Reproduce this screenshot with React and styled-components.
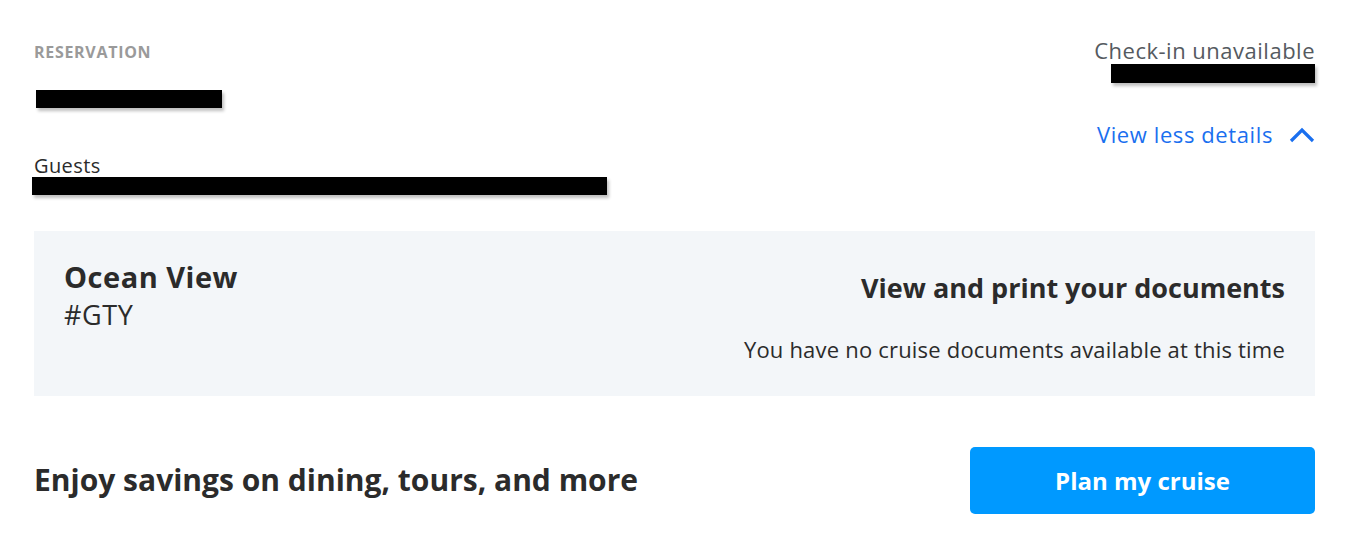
import React from "react";
import styled, { createGlobalStyle } from "styled-components";

const GlobalStyle = createGlobalStyle`
  body {
    margin: 0;
    background: #fff;
    font-family: "Open Sans", Lato, sans-serif;
    color: #2b2b2b;
  }
`;

const Page = styled.div`
  padding: 41px 33px 0 34px;
`;

const TopRow = styled.div`
  display: flex;
  justify-content: space-between;
  align-items: flex-start;
`;

const Column = styled.div`
  display: flex;
  flex-direction: column;
  align-items: ${(props) => (props.right ? "flex-end" : "flex-start")};
`;

const Label = styled.span`
  margin-top: 1px;
  font-size: 16px;
  font-weight: 700;
  color: #9a9a9a;
  letter-spacing: 0.7px;
  line-height: 20px;
`;

const Redacted = styled.div`
  width: ${(props) => props.w}px;
  height: ${(props) => props.h || 18}px;
  margin-top: ${(props) => props.mt || 0}px;
  margin-left: ${(props) => props.ml || 0}px;
  background: #000;
  box-shadow: 2px 3px 3px rgba(0, 0, 0, 0.25);
`;

const GuestsLabel = styled.span`
  margin-top: 47px;
  font-size: 20px;
  letter-spacing: 0.4px;
  line-height: 22px;
  color: #2b2b2b;
`;

const Status = styled.span`
  margin-top: -2px;
  font-size: 22px;
  letter-spacing: 0.5px;
  line-height: 22px;
  color: #555a60;
`;

const ToggleLink = styled.a`
  display: flex;
  align-items: center;
  gap: 16px;
  margin-top: 38px;
  font-size: 22px;
  letter-spacing: 0.6px;
  line-height: 27px;
  color: #1a6fef;
  text-decoration: none;
  cursor: pointer;
`;

const Panel = styled.div`
  margin-top: 36px;
  background: #f3f6f9;
  display: flex;
  justify-content: space-between;
  padding: 30px 30px 0;
  height: 165px;
  box-sizing: border-box;
`;

const RoomName = styled.h2`
  margin: 0;
  font-size: 29px;
  letter-spacing: 0.5px;
  line-height: 32px;
  font-weight: 700;
  color: #2b2b2b;
`;

const RoomCode = styled.span`
  margin-top: 6px;
  font-size: 27px;
  letter-spacing: 0.6px;
  line-height: 32px;
  color: #2b2b2b;
`;

const DocsTitle = styled.h3`
  margin: 12px 0 0;
  font-size: 27px;
  line-height: 30px;
  font-weight: 700;
  color: #2b2b2b;
`;

const DocsNote = styled.p`
  margin: 34px 0 0;
  font-size: 22px;
  letter-spacing: 0.2px;
  line-height: 24px;
  color: #2b2b2b;
`;

const PromoRow = styled.div`
  display: flex;
  justify-content: space-between;
  align-items: center;
  margin-top: 51px;
`;

const PromoText = styled.h2`
  margin: 0 0 3px;
  font-size: 30px;
  font-weight: 700;
  color: #2b2b2b;
`;

const PrimaryButton = styled.button`
  width: 345px;
  height: 67px;
  border: none;
  border-radius: 5px;
  background: #0099ff;
  color: #fff;
  font-family: inherit;
  font-size: 24px;
  font-weight: 700;
  cursor: pointer;
`;

const ChevronUp = () => (
  <svg width="26" height="16" viewBox="0 0 26 16" fill="none">
    <path d="M2 14 L13 3 L24 14" stroke="#1a6fef" strokeWidth="3.2" />
  </svg>
);

export default function App() {
  return (
    <>
      <GlobalStyle />
      <Page>
        <TopRow>
          <Column>
            <Label>RESERVATION</Label>
            <Redacted w={186} mt={28} ml={2} />
            <GuestsLabel>Guests</GuestsLabel>
            <Redacted w={575} mt={0} ml={-2} />
          </Column>
          <Column right>
            <Status>Check-in unavailable</Status>
            <Redacted w={204} h={19} mt={3} />
            <ToggleLink>
              View less details
              <ChevronUp />
            </ToggleLink>
          </Column>
        </TopRow>
        <Panel>
          <Column>
            <RoomName>Ocean View</RoomName>
            <RoomCode>#GTY</RoomCode>
          </Column>
          <Column right>
            <DocsTitle>View and print your documents</DocsTitle>
            <DocsNote>You have no cruise documents available at this time</DocsNote>
          </Column>
        </Panel>
        <PromoRow>
          <PromoText>Enjoy savings on dining, tours, and more</PromoText>
          <PrimaryButton>Plan my cruise</PrimaryButton>
        </PromoRow>
      </Page>
    </>
  );
}
